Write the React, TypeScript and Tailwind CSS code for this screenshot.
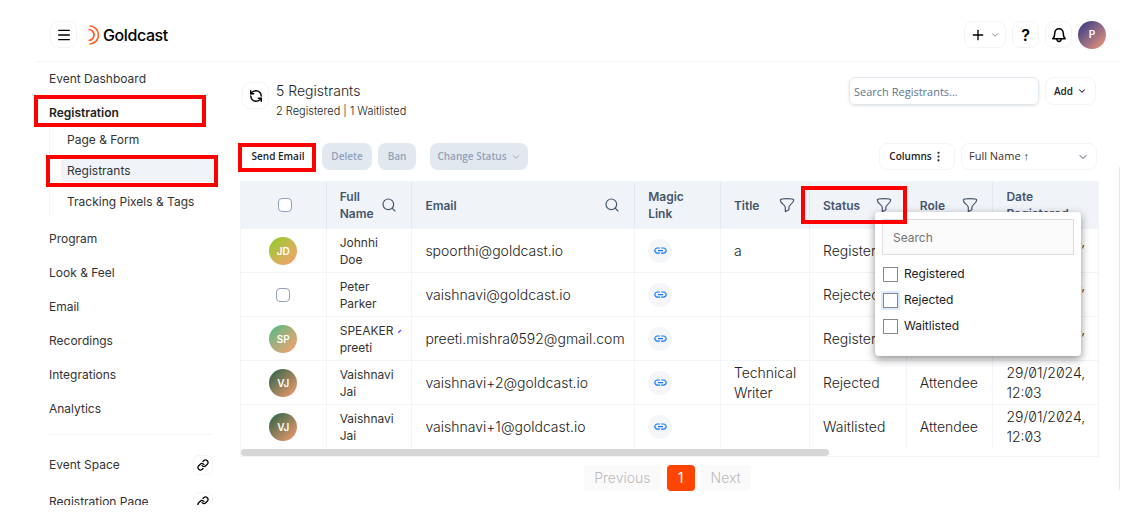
import React from 'react';
import { ChevronDown, Link as LinkIcon, Menu, MoreVertical, Plus, RefreshCcw, Search } from 'lucide-react';
import { MdLink } from 'react-icons/md';

interface Registrant {
  initials?: string;
  avatar?: string;
  name: string[];
  marked?: boolean;
  email: string;
  title?: string;
  status: string;
  role?: string;
}

const registrants: Registrant[] = [
  { initials: 'JD', avatar: 'from-[#84cc16] to-[#fb9a70]', name: ['Johnhi', 'Doe'], email: 'spoorthi@goldcast.io', title: 'a', status: 'Registered' },
  { name: ['Peter', 'Parker'], email: 'vaishnavi@goldcast.io', status: 'Rejected' },
  { initials: 'SP', avatar: 'from-[#10b981] to-[#fb9a70]', name: ['SPEAKER', 'preeti'], marked: true, email: 'preeti.mishra0592@gmail.com', status: 'Registered' },
  { initials: 'VJ', avatar: 'from-[#065f46] to-[#fb9a70]', name: ['Vaishnavi', 'Jai'], email: 'vaishnavi+2@goldcast.io', title: 'Technical Writer', status: 'Rejected', role: 'Attendee' },
  { initials: 'VJ', avatar: 'from-[#065f46] to-[#fb9a70]', name: ['Vaishnavi', 'Jai'], email: 'vaishnavi+1@goldcast.io', status: 'Waitlisted', role: 'Attendee' },
];

const Highlight: React.FC<{ className: string }> = ({ className }) => (
  <span className={`absolute border-4 border-[#ff0000] pointer-events-none z-30 ${className}`} />
);

const FunnelIcon = () => (
  <svg viewBox="0 0 16 16" className="w-4 h-4 text-slate-600" fill="none" stroke="currentColor" strokeWidth="1.2" strokeLinejoin="round">
    <path d="M1.3 2.9C1.3 2.1 4.3 1.6 8 1.6s6.7.5 6.7 1.3c0 1.8-1.2 3.1-3.1 4.7C10.2 8.8 9.9 9.5 9.9 10.6v2.2L6.3 14.6v-4c0-1.1-.4-1.8-1.8-3C2.5 6 1.3 4.7 1.3 2.9z" />
  </svg>
);

const BellIcon = () => (
  <svg viewBox="0 0 16 16" className="w-4 h-4" fill="none" stroke="currentColor" strokeWidth="1.5" strokeLinejoin="round" strokeLinecap="round">
    <path d="M8 1.7c2.5 0 4.2 1.9 4.2 4.3 0 2.8.6 4.3 2 5.8H1.8c1.4-1.5 2-3 2-5.8 0-2.4 1.7-4.3 4.2-4.3z" />
    <path d="M5.8 12c.1 1.5 1 2.4 2.2 2.4s2.1-.9 2.2-2.4" />
  </svg>
);

const Logo = () => (
  <div className="flex items-center gap-1">
    <svg viewBox="0 0 11 20" className="w-[11px] h-5" fill="none" stroke="#ff5a1f">
      <path d="M1.5 1a9 9 0 0 1 0 18" strokeWidth="1.5" />
      <path d="M.5 4.5a5.5 5.5 0 0 1 0 11" strokeWidth="1.7" />
    </svg>
    <span className="text-base font-medium tracking-tight text-black">Goldcast</span>
  </div>
);

const Header = () => (
  <header className="ml-9 mr-[18px] h-[62px] pt-2 pl-3.5 pr-[13px] flex items-center gap-[11px] border-b border-slate-100 shrink-0 text-black">
    <button aria-label="Menu" className="w-[27px] h-[27px] rounded-lg border border-slate-100 flex items-center justify-center">
      <Menu size={16} />
    </button>
    <Logo />
    <div className="ml-auto flex items-center gap-1.5">
      <button aria-label="Create" className="h-[27px] w-[42px] rounded-lg border border-slate-100 flex items-center justify-center gap-1">
        <Plus size={16} />
        <ChevronDown size={10} className="text-slate-500" />
      </button>
      <button aria-label="Help" className="w-[27px] h-[27px] rounded-lg border border-slate-100 text-base font-semibold">?</button>
      <button aria-label="Notifications" className="w-[27px] h-[27px] rounded-lg border border-slate-100 flex items-center justify-center">
        <BellIcon />
      </button>
      <button className="w-7 h-7 rounded-full bg-linear-to-br from-[#312e81] to-[#fb9a70] text-white text-[10px] font-semibold">P</button>
    </div>
  </header>
);

const Sidebar = () => {
  const menuItems = ['Program', 'Look & Feel', 'Email', 'Recordings', 'Integrations', 'Analytics'];
  const pages = ['Event Space', 'Registration Page'];

  return (
    <nav className="w-[218px] pl-[49px] pr-[5px] shrink-0 overflow-hidden text-xs text-[#333]">
      <a href="#dashboard" className="h-[34px] flex items-center">Event Dashboard</a>
      <a href="#registration" className="h-8 pt-0.5 flex items-center relative font-semibold text-[#222]">
        Registration
        <Highlight className="-left-[15px] right-[7px] -top-px h-8" />
      </a>
      <div className="border-l border-slate-100 pb-1 mb-[5px] pl-[11px] flex flex-col gap-2">
        <a href="#form" className="h-[23px] px-1.5 flex items-center">Page & Form</a>
        <a href="#registrants" className="h-[23px] px-1.5 flex items-center relative rounded-sm bg-[#f0f4f9]">
          Registrants
          <Highlight className="-left-[15px] -right-[5px] -top-1 h-8" />
        </a>
        <a href="#tracking" className="h-[23px] px-1.5 flex items-center whitespace-nowrap">Tracking Pixels & Tags</a>
      </div>
      {menuItems.map((item) => (
        <a key={item} href="#section" className="h-[34px] flex items-center">{item}</a>
      ))}
      <div className="border-t border-slate-100 mt-2 pt-[11px]">
        {pages.map((page) => (
          <div key={page} className="h-[37px] flex items-center justify-between">
            <a href="#page">{page}</a>
            <button aria-label={`Copy ${page} link`} className="w-5 h-5 rounded-md border border-slate-100 flex items-center justify-center text-black">
              <LinkIcon size={12} strokeWidth={2.5} />
            </button>
          </div>
        ))}
      </div>
    </nav>
  );
};

const Toolbar = () => (
  <div className="font-['Open_Sans',sans-serif] mt-[22px] flex items-center text-[10px] font-semibold">
    <button className="relative w-[76px] h-[27px] text-[#222]">
      Send Email
      <Highlight className="-left-0.5 right-0 top-0 -bottom-0.5" />
    </button>
    <button disabled className="ml-1.5 w-[50px] h-[27px] rounded-lg bg-slate-200 text-slate-400">Delete</button>
    <button disabled className="ml-1.5 w-[38px] h-[27px] rounded-lg bg-slate-200 text-slate-400">Ban</button>
    <button disabled className="ml-3.5 w-[98px] h-[27px] rounded-lg bg-slate-200 text-slate-400 flex items-center justify-center gap-1">
      Change Status <ChevronDown size={10} />
    </button>
    <button className="ml-auto w-[76px] h-[27px] rounded-lg border border-slate-100 text-[#222] flex items-center justify-center">
      Columns <MoreVertical size={13} />
    </button>
    <div className="relative ml-1.5 mr-0.5 w-[136px]">
      <select aria-label="Sort by" className="w-full h-[27px] pl-[7px] appearance-none rounded-lg border border-slate-100 bg-white text-[11px] font-normal text-[#333]">
        <option>Full Name ↑</option>
      </select>
      <ChevronDown size={12} className="absolute right-2 top-2 text-slate-600 pointer-events-none" />
    </div>
  </div>
);

const StatusFilter = () => (
  <div className="absolute left-[65px] top-[30px] z-20 w-[206px] h-[144px] px-[7px] pt-[7px] rounded bg-white shadow-[0_3px_8px_rgba(0,0,0,0.45)] font-normal text-xs text-[#222]">
    <input type="text" aria-label="Search statuses" placeholder="Search" className="block w-full h-9 px-2.5 mb-1.5 border border-[#ddd] bg-[#fafafa] placeholder:text-[#757575]" />
    {['Registered', 'Rejected', 'Waitlisted'].map((status) => (
      <label key={status} className="h-[26px] pl-px flex items-center gap-1.5">
        <input
          type="checkbox"
          className={`appearance-none w-[15px] h-[15px] border border-[#888] bg-white ${status === 'Rejected' ? 'ring-2 ring-blue-100' : ''}`}
        />
        {status}
      </label>
    ))}
  </div>
);

const headCell = 'h-[46px] pl-[13px] border-r border-slate-200 text-left font-semibold leading-[17px]';
const cell = 'pl-[13px] border-r border-t border-slate-100';

const RegistrantsTable = () => (
  <div className="mt-[11px] border border-slate-100">
    <table className="w-full table-fixed border-separate border-spacing-0 text-sm leading-5 text-[#222] slashed-zero">
      <colgroup>
        <col className="w-[10%]" />
        <col className="w-[10%]" />
        <col className="w-[26%]" />
        <col className="w-[10%]" />
        <col className="w-[10.4%]" />
        <col className="w-[11.3%]" />
        <col className="w-[10.1%]" />
        <col />
      </colgroup>
      <thead className="bg-[#f0f4f9] text-xs text-slate-600">
        <tr>
          <th className="h-[46px] pl-1 border-r border-slate-200">
            <input type="checkbox" aria-label="Select all" className="appearance-none block mx-auto w-3.5 h-3.5 rounded-sm border border-slate-400 bg-white" />
          </th>
          <th className={headCell}>
            <div className="flex items-center justify-between pr-3.5">Full<br />Name <Search size={16} strokeWidth={1.75} /></div>
          </th>
          <th className={headCell}>
            <div className="flex items-center justify-between pr-3.5">Email <Search size={16} strokeWidth={1.75} /></div>
          </th>
          <th className={headCell}>Magic<br />Link</th>
          <th className={headCell}>
            <div className="flex items-center justify-between pr-3.5">Title <FunnelIcon /></div>
          </th>
          <th className={`${headCell} relative`}>
            <div className="flex items-center justify-between pr-3.5">Status <FunnelIcon /></div>
            <StatusFilter />
            <Highlight className="-left-[9px] -right-px top-1 h-[38px]" />
          </th>
          <th className={headCell}>
            <div className="flex items-center justify-between pr-3.5">Role <FunnelIcon /></div>
          </th>
          <th className="h-[46px] pl-[13px] text-left font-semibold leading-[17px]">Date<br />Registered</th>
        </tr>
      </thead>
      <tbody className="font-light">
        {registrants.map((r) => (
          <tr key={r.email} className="h-11">
            <td className="border-r border-t border-slate-100">
              {r.initials ? (
                <div className={`mx-auto w-7 h-7 rounded-full bg-linear-to-br ${r.avatar} flex items-center justify-center text-[10px] font-semibold text-white`}>
                  {r.initials}
                </div>
              ) : (
                <input type="checkbox" aria-label="Select registrant" className="appearance-none block mx-auto w-3.5 h-3.5 rounded-sm border border-slate-400 bg-white" />
              )}
            </td>
            <td className={`${cell} text-xs leading-[17px] font-normal text-[#333] whitespace-nowrap`}>
              {r.name[0]}
              {r.marked && (
                <svg viewBox="0 0 4 4" className="inline ml-1 w-1 h-1 align-middle"><path d="M0 4L3 1" stroke="#6d4aff" strokeWidth="1.3" /></svg>
              )}
              <br />
              {r.name[1]}
            </td>
            <td className={cell}>{r.email}</td>
            <td className={cell}>
              <button aria-label="Copy magic link" className="w-6 h-6 rounded-full bg-[#f5f6fa] flex items-center justify-center text-[#0a7aff]">
                <MdLink size={15} />
              </button>
            </td>
            <td className={cell}>{r.title}</td>
            <td className={cell}>{r.status}</td>
            <td className={cell}>{r.role}</td>
            <td className="pl-[13px] border-t border-slate-100">29/01/2024,<br />12:03</td>
          </tr>
        ))}
      </tbody>
    </table>
    <div className="mt-px h-[7px] w-[68.6%] rounded-full bg-[#d6d6d6]" />
  </div>
);

const App: React.FC = () => (
  <div className="h-screen pb-[25px] flex flex-col overflow-hidden bg-white font-['Inter',sans-serif]">
    <Header />
    <div className="flex flex-1 min-h-0">
      <Sidebar />
      <main className="relative flex-1 min-w-0 ml-[22px] mr-[17px] pr-[21px] pt-[15px]">
        <span className="absolute right-0 top-[105px] bottom-[15px] border-r border-slate-200" />
        <div className="flex items-start">
          <button aria-label="Refresh" className="mt-[5px] ml-0.5 w-[27px] h-[27px] rounded-lg border border-slate-100 flex items-center justify-center text-black">
            <RefreshCcw size={14} strokeWidth={2.5} />
          </button>
          <div className="ml-[7px] mt-1 text-[#222]">
            <h1 className="text-sm leading-5 font-light">5 Registrants</h1>
            <p className="text-[11px] leading-5 font-light">2 Registered | 1 Waitlisted</p>
          </div>
          <input
            type="text"
            aria-label="Search registrants"
            placeholder="Search Registrants..."
            className="ml-auto w-[190px] h-7 px-1 rounded-md border border-slate-200 shadow font-['Open_Sans',sans-serif] text-[11px] placeholder:text-slate-500"
          />
          <button className="ml-1.5 mr-[3px] w-[51px] h-7 rounded-lg border border-slate-100 font-['Open_Sans',sans-serif] text-[10px] font-semibold text-[#222] flex items-center justify-center gap-1">
            Add <ChevronDown size={10} strokeWidth={2.5} />
          </button>
        </div>
        <Toolbar />
        <RegistrantsTable />
        <div className="mt-2 mr-1 flex justify-center gap-1.5 text-sm">
          <button disabled className="h-[26px] px-2.5 rounded-sm bg-[#fafafa] font-light text-[#bbb]">Previous</button>
          <button className="w-7 h-[26px] rounded-sm bg-[#ff4500] text-white">1</button>
          <button disabled className="h-[26px] px-2.5 rounded-sm bg-[#fafafa] font-light text-[#bbb]">Next</button>
        </div>
      </main>
    </div>
  </div>
);

export default App;
